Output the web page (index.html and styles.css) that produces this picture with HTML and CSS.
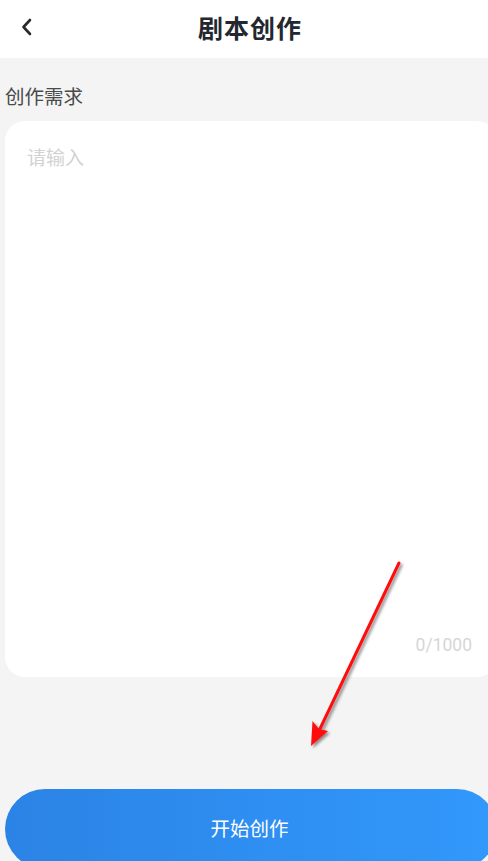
FILE: index.html
```html
<!DOCTYPE html>
<html lang="zh">
<head>
<meta charset="utf-8">
<title>剧本创作</title>
<link rel="stylesheet" href="styles.css">
</head>
<body>
<div class="page">
  <header class="topbar">
    <button class="back" aria-label="返回">
      <svg width="14" height="18" viewBox="0 0 14 18"><path d="M10 2 L3.5 9 L10 16" fill="none" stroke="#2a2a2a" stroke-width="2.6" stroke-linecap="round" stroke-linejoin="round"/></svg>
    </button>
    <h1 class="title">剧本创作</h1>
  </header>
  <main class="content">
    <div class="label">创作需求</div>
    <div class="card">
      <div class="placeholder">请输入</div>
      <div class="counter">0/1000</div>
    </div>
    <button class="submit">开始创作</button>
  </main>
  <svg class="pointer" width="488" height="861" viewBox="0 0 488 861">
    <defs>
      <filter id="sh" x="-20%" y="-20%" width="140%" height="140%">
        <feDropShadow dx="2" dy="2" stdDeviation="1.6" flood-color="#000" flood-opacity="0.45"/>
      </filter>
    </defs>
    <g filter="url(#sh)">
      <line x1="399" y1="563" x2="318" y2="733" stroke="#ff0f0f" stroke-width="3" stroke-linecap="round"/>
      <path d="M311 746 L312.5 721 L319 729 L328 731 Z" fill="#ff0f0f"/>
    </g>
  </svg>
</div>
</body>
</html>
```
FILE: styles.css
```css
html, body {
  margin: 0;
  padding: 0;
  overflow: hidden;
  background: #f4f4f4;
}
body {
  font-family: "Noto Sans CJK SC", "Noto Sans", sans-serif;
  width: 488px;
  height: 861px;
  position: relative;
}
.page {
  width: 498px;
  height: 861px;
  background: #f4f4f4;
  display: flex;
  flex-direction: column;
}
.topbar {
  height: 58px;
  background: #ffffff;
  display: flex;
  align-items: flex-start;
  justify-content: center;
  position: relative;
  flex-shrink: 0;
  box-sizing: border-box;
  padding: 11px 0 0 2px;
}
.back {
  position: absolute;
  left: 20px;
  top: 18px;
  border: 0;
  background: none;
  padding: 0;
  width: 14px;
  height: 18px;
  display: flex;
}
.title {
  margin: 0;
  font-size: 25px;
  font-weight: 700;
  color: #232830;
  letter-spacing: 1px;
  line-height: 32px;
}
.content {
  flex: 1;
  display: flex;
  flex-direction: column;
  padding: 0 1px 0 5px;
}
.label {
  margin-top: 24px;
  font-size: 19.5px;
  line-height: 28px;
  color: #4a4a4a;
}
.card {
  margin-top: 11px;
  height: 556px;
  background: #ffffff;
  border-radius: 20px;
  display: flex;
  flex-direction: column;
  justify-content: space-between;
  padding: 21px 25px 22px 22px;
  box-sizing: border-box;
}
.placeholder {
  font-size: 19px;
  line-height: 30px;
  color: #d2d2d2;
}
.counter {
  align-self: flex-end;
  font-family: Roboto, "Noto Sans", sans-serif;
  font-size: 17.5px;
  line-height: 20px;
  color: #d6d6d6;
}
.submit {
  margin-top: 112px;
  height: 80px;
  border: 0;
  border-radius: 40px;
  background: linear-gradient(90deg, #2b83e5 0%, #2f90f3 60%, #3298fb 100%);
  color: #ffffff;
  font-family: "Noto Sans CJK SC", sans-serif;
  font-size: 19.5px;
  display: flex;
  justify-content: center;
  padding: 26px 3px 0 0;
  box-sizing: border-box;
  line-height: 26px;
}
.pointer {
  position: absolute;
  left: 0;
  top: 0;
  pointer-events: none;
}
```
